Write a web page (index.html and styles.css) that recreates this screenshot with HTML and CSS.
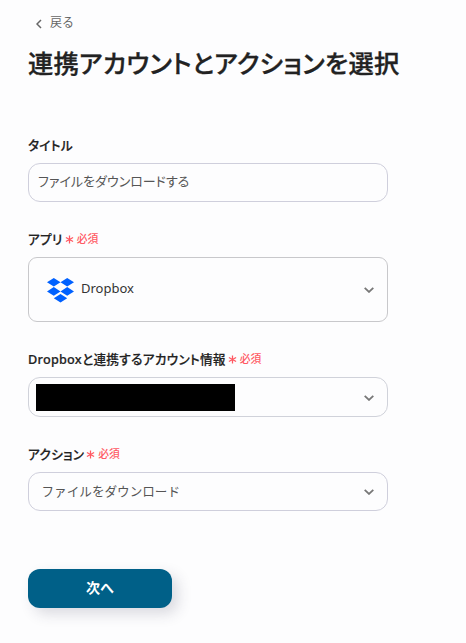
FILE: index.html
```html
<!DOCTYPE html>
<html lang="ja">
<head>
    <meta charset="UTF-8">
    <meta name="viewport" content="width=device-width, initial-scale=1.0">
    <title>連携アカウントとアクションを選択</title>
    <link rel="stylesheet" href="styles.css">
</head>
<body>
    <main class="container">
        <a class="back-link">
            <svg class="back-icon" viewBox="0 0 6 10"><path d="M5 1L1 5l4 4"/></svg>
            <span>戻る</span>
        </a>
        <h1><span class="heading-text">連携アカウントとアクションを選択</span></h1>

        <div class="field title-field">
            <div class="label"><span class="label-text">タイトル</span></div>
            <div class="box"><span class="value">ファイルをダウンロードする</span></div>
        </div>

        <div class="field app-field">
            <div class="label">
                <span class="label-text">アプリ</span>
                <span class="required"><svg class="asterisk" viewBox="0 0 10 10"><path d="M5 .5v9M1 2.8l8 4.4M9 2.8L1 7.2"/></svg><span class="required-text">必須</span></span>
            </div>
            <div class="box">
                <svg class="dropbox-logo" viewBox="0 0 27 25">
                    <path d="M6.8 0L0 4.3l6.8 4.3 6.7-4.3zM20.2 0l-6.7 4.3 6.7 4.3L27 4.3zM0 13.4l6.8 4.3 6.7-4.3-6.7-4.3zM20.2 9.1l-6.7 4.3 6.7 4.3 6.8-4.3zM6.8 20.2l6.7 4.3 6.7-4.3-6.7-4.3z"/>
                </svg>
                <span class="value">Dropbox</span>
                <svg class="chevron" viewBox="0 0 10 6"><path d="M.7.8L5 4.9 9.3.8"/></svg>
            </div>
        </div>

        <div class="field account-field">
            <div class="label">
                <span class="label-text">Dropboxと連携するアカウント情報</span>
                <span class="required"><svg class="asterisk" viewBox="0 0 10 10"><path d="M5 .5v9M1 2.8l8 4.4M9 2.8L1 7.2"/></svg><span class="required-text">必須</span></span>
            </div>
            <div class="box">
                <span class="masked"></span>
                <svg class="chevron" viewBox="0 0 10 6"><path d="M.7.8L5 4.9 9.3.8"/></svg>
            </div>
        </div>

        <div class="field action-field">
            <div class="label">
                <span class="label-text">アクション</span>
                <span class="required"><svg class="asterisk" viewBox="0 0 10 10"><path d="M5 .5v9M1 2.8l8 4.4M9 2.8L1 7.2"/></svg><span class="required-text">必須</span></span>
            </div>
            <div class="box">
                <span class="value">ファイルをダウンロード</span>
                <svg class="chevron" viewBox="0 0 10 6"><path d="M.7.8L5 4.9 9.3.8"/></svg>
            </div>
        </div>

        <button class="next-button" type="button">次へ</button>
    </main>
</body>
</html>
```
FILE: styles.css
```css
* {
    box-sizing: border-box;
}

body {
    margin: 0;
    background: #fdfdfe;
    color: #222;
    font-family: "Noto Sans", "Noto Sans CJK JP", sans-serif;
    font-size: 13px;
}

.container {
    width: 388px;
    min-height: 643px;
    padding: 12px 0 0 28px;
}

.back-link {
    display: flex;
    align-items: center;
    gap: 8px;
    height: 20px;
    padding-left: 8px;
    color: #666;
    font-size: 12px;
}

.back-icon {
    width: 6px;
    height: 10px;
    margin-top: 3px;
    fill: none;
    stroke: #666;
    stroke-width: 1.5;
}

h1 {
    height: 40px;
    margin: 11px 0 51px;
    font-size: 25.3px;
    font-weight: 500;
    letter-spacing: 0.2px;
    line-height: 40px;
    white-space: nowrap;
    font-feature-settings: "palt";
    -webkit-text-stroke: 0.3px #222;
}

.field {
    margin-bottom: 26px;
}

.label {
    display: flex;
    align-items: center;
    height: 20px;
    margin-bottom: 9px;
    font-weight: 500;
    white-space: nowrap;
    font-feature-settings: "palt";
}

.label-text {
    font-size: 12.7px;
    letter-spacing: 0.25px;
    -webkit-text-stroke: 0.2px #222;
}

.required {
    display: flex;
    align-items: center;
    gap: 3px;
    margin-left: 2px;
    color: #ff5963;
    font-size: 10.8px;
}

.asterisk {
    width: 9px;
    height: 9px;
    margin-top: 2px;
    fill: none;
    stroke: #ff5963;
    stroke-width: 1.4;
}

.box {
    display: flex;
    align-items: center;
    height: 39px;
    border: 1px solid #cfcfdc;
    border-radius: 12px;
    color: #555;
}

.title-field .value {
    margin-left: 9px;
    font-feature-settings: "palt";
}

.title-field .box {
    padding-bottom: 4px;
}

.action-field .box {
    padding-bottom: 1px;
}

.app-field .box {
    height: 65px;
    border-color: #c8c8cb;
    border-radius: 9px;
    color: #333;
}

.app-field .value {
    margin: 0 0 3px 7px;
}

.account-field .box {
    height: 40px;
    border-color: #d0d2da;
}

.action-field .value {
    margin: 0 0 1px 12.5px;
    font-size: 12.6px;
}

.dropbox-logo {
    width: 27px;
    height: 25px;
    margin: 1px 0 0 18px;
    fill: #0061ff;
}

.masked {
    width: 199px;
    height: 27px;
    margin-left: 7px;
    background: #000;
}

.chevron {
    width: 10px;
    height: 6px;
    margin: 2px 13px 0 auto;
    fill: none;
    stroke: #777;
    stroke-width: 1.8;
}

.app-field .chevron {
    margin-top: 0;
}

.next-button {
    display: block;
    width: 144px;
    height: 39px;
    margin-top: 58px;
    padding: 0 0 4px;
    border: 0;
    border-radius: 12px;
    background: #006088;
    box-shadow: 6px 6px 14px rgba(45, 45, 80, 0.17);
    color: #fff;
    font-family: inherit;
    font-size: 14px;
    font-weight: bold;
}
```
